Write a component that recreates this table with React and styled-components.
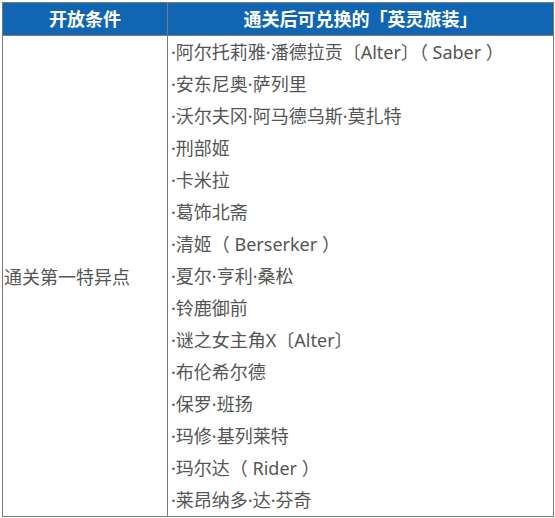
import React from "react";
import styled, { createGlobalStyle } from "styled-components";

const GlobalStyle = createGlobalStyle`
  body {
    margin: 0;
    padding: 2px;
    background: #fff;
    font-family: "Noto Sans", "Noto Sans CJK SC", sans-serif;
  }
`

const Table = styled.table`
  width: 552px;
  border-collapse: collapse;
  border: 1px solid #7a7a7a;
  table-layout: fixed;
`

const HeadCell = styled.th`
  height: 32px;
  padding: 0;
  background-color: #1166b3;
  color: #fff;
  font-size: 18px;
  line-height: 32px;
  font-weight: 700;
  text-align: center;
  border: 1px solid #7a7a7a;
  width: ${props => props.width || "auto"};
`

const CondCell = styled.td`
  padding: 0 0 0 1px;
  vertical-align: middle;
  color: #555;
  font-size: 18px;
  border: 1px solid #7a7a7a;
`

const ListCell = styled.td`
  padding: 0 0 0 3px;
  border: 1px solid #7a7a7a;
`

const Item = styled.div`
  height: 32px;
  line-height: 32px;
  font-size: 18px;
  color: #555;
  white-space: nowrap;
`

const items = [
  "·阿尔托莉雅·潘德拉贡〔Alter〕（ Saber ）",
  "·安东尼奥·萨列里",
  "·沃尔夫冈·阿马德乌斯·莫扎特",
  "·刑部姬",
  "·卡米拉",
  "·葛饰北斋",
  "·清姬（ Berserker ）",
  "·夏尔·亨利·桑松",
  "·铃鹿御前",
  "·谜之女主角X〔Alter〕",
  "·布伦希尔德",
  "·保罗·班扬",
  "·玛修·基列莱特",
  "·玛尔达（ Rider ）",
  "·莱昂纳多·达·芬奇",
]

const App = () => {
  return (
    <>
      <GlobalStyle />
      <Table>
        <thead>
          <tr>
            <HeadCell width="164px">开放条件</HeadCell>
            <HeadCell>通关后可兑换的「英灵旅装」</HeadCell>
          </tr>
        </thead>
        <tbody>
          <tr>
            <CondCell>通关第一特异点</CondCell>
            <ListCell>
              {items.map((name) => (
                <Item key={name}>{name}</Item>
              ))}
            </ListCell>
          </tr>
        </tbody>
      </Table>
    </>
  )
}

export default App;
